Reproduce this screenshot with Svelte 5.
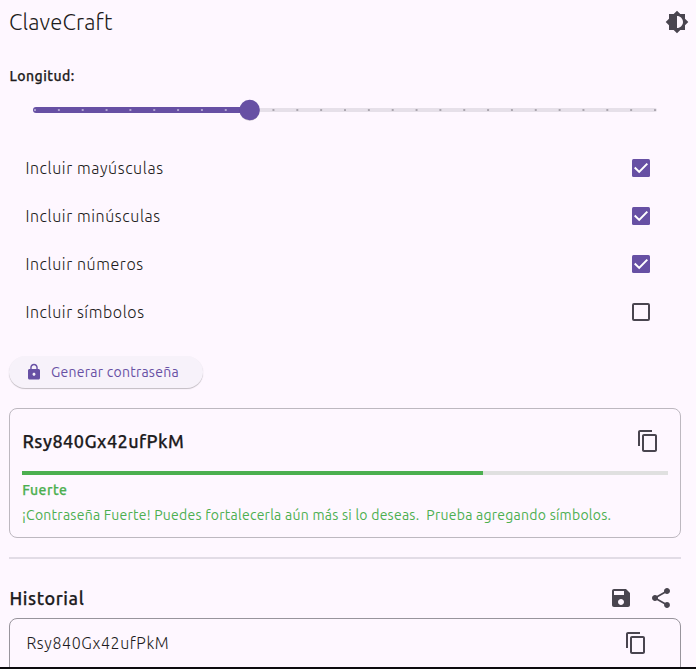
<script>
  let length = $state(13);
  const min = 4;
  const max = 30;
  const ticks = Array.from({ length: max - min + 1 }, (_, i) => i);
  let position = $derived((length - min) / (max - min));

  let options = $state([
    { label: 'Incluir mayúsculas', on: true },
    { label: 'Incluir minúsculas', on: true },
    { label: 'Incluir números', on: true },
    { label: 'Incluir símbolos', on: false }
  ]);

  const password = 'Rsy840Gx42ufPkM';
  const strength = 5 / 7;
</script>

{#snippet copyIcon()}
  <svg class="icon" viewBox="0 0 24 24" aria-hidden="true">
    <path d="M16 1H4c-1.100 0-2 .9-2 2v14h2V3h12V1zm3 4H8c-1.100 0-2 .9-2 2v14c0 1.100.9 2 2 2h11c1.100 0 2-.9 2-2V7c0-1.100-.9-2-2-2zm0 16H8V7h11v14z" />
  </svg>
{/snippet}

<main>
  <header>
    <h1><span>ClaveCraft</span></h1>
    <svg class="icon" viewBox="0 0 24 24" aria-hidden="true">
      <path d="M20 15.310L23.310 12 20 8.690V4h-4.690L12 .690 8.690 4H4v4.690L.690 12 4 15.310V20h4.690L12 23.310 15.310 20H20v-4.690zM12 18V6c3.310 0 6 2.690 6 6s-2.690 6-6 6z" />
    </svg>
  </header>

  <h2 class="length-label"><span>Longitud:</span></h2>

  <svg class="slider" viewBox="0 0 624 28" aria-hidden="true">
    <rect x="200" y="12" width="424" height="4" rx="2" fill="#e6e0e9" />
    <rect x="0" y="11" width={2 + position * 620} height="6" rx="3" fill="#6750a4" />
    {#each ticks as t}
      <rect x={1 + (t / 26) * 620} y="13" width="2" height="2" rx=".5"
        fill={t <= length - min ? '#b0a4d0' : '#aaa5ae'} />
    {/each}
    <circle cx={2 + position * 620} cy="14.700" r="10" fill="#000" opacity=".2" />
    <circle cx={2 + position * 620} cy="14" r="10.200" fill="#6750a4" />
  </svg>

  <div class="options">
    {#each options as option}
      <label class="option">
        <span>{option.label}</span>
        <input type="checkbox" bind:checked={option.on} />
        <svg class="box" viewBox="0 0 18 18" aria-hidden="true">
          {#if option.on}
            <rect width="18" height="18" rx="1.500" fill="#6750a4" />
            <path d="M2.700 8.500L7.200 12.900L15.300 4.600" fill="none" stroke="#fff" stroke-width="2" />
          {:else}
            <rect x="1" y="1" width="16" height="16" rx="1" fill="none" stroke="#49454f" stroke-width="2" />
          {/if}
        </svg>
      </label>
    {/each}
  </div>

  <button class="generate">
    <svg viewBox="0 0 24 24" aria-hidden="true">
      <path d="M18 8h-1V6c0-2.760-2.240-5-5-5S7 3.240 7 6v2H6c-1.100 0-2 .9-2 2v10c0 1.100.9 2 2 2h12c1.100 0 2-.9 2-2V10c0-1.100-.9-2-2-2zm-6 9c-1.100 0-2-.9-2-2s.9-2 2-2 2 .9 2 2-.9 2-2 2zm3.100-9H8.900V6c0-1.710 1.390-3.100 3.100-3.100 1.710 0 3.100 1.390 3.100 3.100v2z" />
    </svg>
    <span>Generar contraseña</span>
  </button>

  <section class="card result">
    <div class="row">
      <strong class="password">{password}</strong>
      {@render copyIcon()}
    </div>
    <div class="meter"><div style="width: {strength * 100}%"></div></div>
    <div class="level"><span>Fuerte</span></div>
    <div class="advice"><span>¡Contraseña Fuerte! Puedes fortalecerla aún más si lo deseas.&nbsp; Prueba agregando símbolos.</span></div>
  </section>

  <hr />

  <div class="history-head">
    <h2><span>Historial</span></h2>
    <svg class="icon" viewBox="0 0 24 24" aria-hidden="true">
      <path d="M17 3H5c-1.110 0-2 .9-2 2v14c0 1.100.89 2 2 2h14c1.100 0 2-.9 2-2V7l-4-4zm-5 16c-1.660 0-3-1.340-3-3s1.340-3 3-3 3 1.340 3 3-1.340 3-3 3zm3-10H5V5h10v4z" />
    </svg>
    <svg class="icon" viewBox="0 0 24 24" aria-hidden="true">
      <path d="M18 16.080c-.76 0-1.440.3-1.960.77L8.910 12.700c.05-.23.09-.46.09-.7s-.04-.47-.09-.7l7.050-4.110c.54.5 1.250.81 2.040.81 1.660 0 3-1.340 3-3s-1.340-3-3-3-3 1.340-3 3c0 .24.04.47.09.7L8.040 9.810C7.500 9.310 6.790 9 6 9c-1.660 0-3 1.340-3 3s1.340 3 3 3c.79 0 1.500-.31 2.040-.81l7.120 4.160c-.05.21-.08.43-.08.65 0 1.610 1.310 2.920 2.920 2.920s2.920-1.310 2.920-2.920-1.310-2.920-2.920-2.920z" />
    </svg>
  </div>

  <section class="card history">
    <span>{password}</span>
    {@render copyIcon()}
  </section>
</main>

<style>
  :global(body) { margin: 0; background: #fef7ff; }
  main {
    box-sizing: border-box;
    width: 696px;
    height: 669px;
    overflow: hidden;
    padding: 0 15px 0 9px;
    display: flex;
    flex-direction: column;
    background: #fef7ff;
    border-bottom: 2px solid #0c0a0e;
    color: #1d1b20;
    font-family: Ubuntu, "Open Sans", "Noto Sans", sans-serif;
  }
  h1, h2 { margin: 0; }
  span, .password { white-space: pre; }
  .icon { width: 24px; height: 24px; fill: #49454f; flex: none; display: block; }
  header {
    display: flex;
    align-items: center;
    justify-content: space-between;
    height: 44px;
    flex: none;
    margin-right: -8px;
  }
  h1 { font-size: 22px; line-height: 30px; font-weight: 300; letter-spacing: 0.150px; }
  .length-label, .password, .level, .history-head h2 {
    font-weight: 500;
    letter-spacing: 0.480px;
    -webkit-text-stroke: 0.250px currentColor;
  }
  .length-label {
    height: 20px;
    margin-top: 22px;
    padding-left: 0.400px;
    font-size: 14px;
    line-height: 20px;
  }
  .slider { width: 624px; height: 28px; margin: 10px 0 0 24px; flex: none; overflow: visible; }
  .options { margin-top: 20px; flex: none; }
  .option {
    height: 48px;
    display: flex;
    align-items: center;
    justify-content: space-between;
    padding: 0 31px 0 16.400px;
    font-size: 16px;
    font-weight: 300;
    letter-spacing: 0.600px;
  }
  .option input { display: none; }
  .box { width: 18px; height: 18px; display: block; }
  .generate {
    width: 194px;
    height: 32px;
    flex: none;
    margin-top: 20px;
    padding: 0 0 0 16px;
    border: 0;
    border-radius: 16px;
    background: #f7f2fa;
    box-shadow: 0 1px 1px rgba(0, 0, 0, 0.24);
    color: #6750a4;
    font: 400 14px/20px Ubuntu, "Open Sans", "Noto Sans", sans-serif;
    letter-spacing: 0.250px;
    display: flex;
    align-items: center;
    gap: 8px;
  }
  .generate svg { width: 18px; height: 18px; fill: #6750a4; }
  .card { box-sizing: border-box; border: 1px solid #bdb8c0; border-radius: 8px; flex: none; }
  .result { height: 130px; margin-top: 20px; padding: 0 12px; }
  .row { display: flex; align-items: center; justify-content: space-between; height: 62px; padding: 1px 8px 0 0.400px; box-sizing: border-box; }
  .password { font-size: 18px; }
  .meter { height: 4px; background: #e0e0e0; }
  .meter div { height: 4px; background: #4caf50; }
  .level { height: 20px; margin-top: 5px; padding-left: 0.200px; color: #4caf50; font-size: 14px; line-height: 20px; }
  .advice { height: 20px; margin-top: 5px; color: #4caf50; font-size: 14px; line-height: 20px; font-weight: 400; letter-spacing: 0.250px; }
  hr { width: 100%; height: 2px; flex: none; margin: 19px 0 0; border: 0; background: #e2dce6; }
  .history-head {
    display: flex;
    align-items: center;
    height: 59px;
    flex: none;
    gap: 16px;
    padding: 19px 8px 0 0;
    box-sizing: border-box;
  }
  .history-head h2 { flex: 1; padding-left: 0.400px; font-size: 18px; line-height: 24px; letter-spacing: 0.580px; }
  .history {
    height: 60px;
    border-color: #98949c;
    display: flex;
    justify-content: space-between;
    padding: 12px 32px 0 16.400px;
    font-size: 16px;
    line-height: 24px;
    font-weight: 300;
    letter-spacing: 0.600px;
  }
</style>
